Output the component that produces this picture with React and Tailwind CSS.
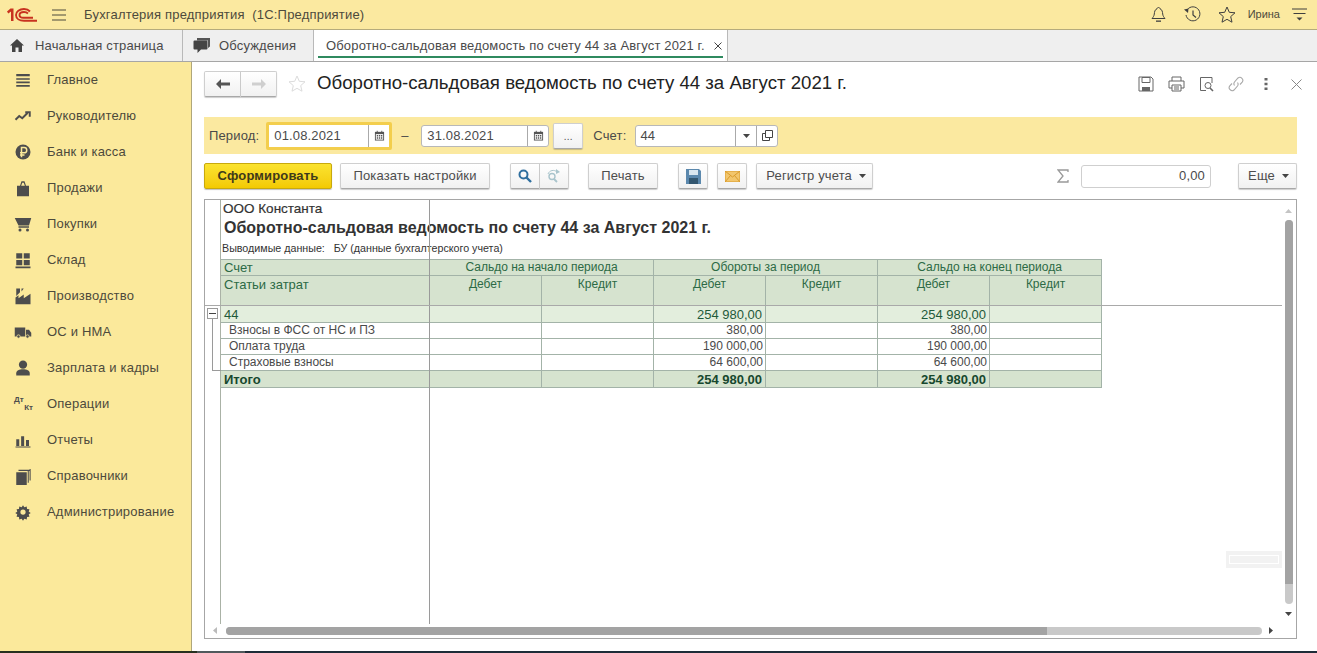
import React from "react";

const I = ({ children, className = "", size = 18, vb = 24 }) => (
  <svg width={size} height={size} viewBox={`0 0 ${vb} ${vb}`} className={`shrink-0 ${className}`}>{children}</svg>
);

const menu = [
  ["Главное", <I><path d="M3 4h18v3H3zM3 9.500h18v2.200H3zM3 14h18v2.200H3zM3 18.500h18V21H3z" fill="#4d4d4d" /></I>],
  ["Руководителю", <I><path d="M2 17l5-5 4 3 7-7M15 7h6v6" fill="none" stroke="#4d4d4d" strokeWidth="2.600" /></I>],
  ["Банк и касса", <I><circle cx="12" cy="12" r="10" fill="#4d4d4d" /><path d="M10 19V6h3.500a3.500 3.500 0 010 7H8M8 16h6" fill="none" stroke="#fbe99b" strokeWidth="2" /></I>],
  ["Продажи", <I><path d="M4 9h4l2-6h4l2 6h4v14H4z" fill="#4d4d4d" /><path d="M9.500 9h5L13 5h-2z" fill="#fbe99b" /></I>],
  ["Покупки", <I><path d="M1 4h22l-3 10H6zM6 15h14v2H6z" fill="#4d4d4d" /><circle cx="8" cy="20" r="2" fill="#4d4d4d" /><circle cx="18" cy="20" r="2" fill="#4d4d4d" /></I>],
  ["Склад", <I><path d="M3 3h8v7H3zM13 3h8v7h-8zM3 12h8v7H3zM13 12h8v7h-8zM2 20.500h20V23H2z" fill="#4d4d4d" /></I>],
  ["Производство", <I><path d="M2 23V14l4-3v4l7-5v5l9-6v14z" fill="#4d4d4d" /><path d="M3 2h5v5l-5 5zM10 2h3l-3 4z" fill="#4d4d4d" /></I>],
  ["ОС и НМА", <I><path d="M1 6h14v12H1zM16 9h4l3 4v5h-7z" fill="#4d4d4d" /><circle cx="6" cy="18" r="2.200" fill="#4d4d4d" stroke="#fbe99b" /><circle cx="18" cy="18" r="2.200" fill="#4d4d4d" stroke="#fbe99b" /></I>],
  ["Зарплата и кадры", <I><circle cx="12" cy="7.500" r="5.500" fill="#4d4d4d" /><path d="M3 22v-3c0-4 4-5.500 9-5.500s9 1.500 9 5.500v3z" fill="#4d4d4d" /></I>],
  ["Операции", <span className="block w-[18px] h-[18px] relative text-[8px] font-bold leading-[8px] text-[#4d4d4d] shrink-0 tracking-normal"><span className="absolute left-0 top-[1px]">Дт</span><span className="absolute right-[-1px] top-[9px]">Кт</span></span>],
  ["Отчеты", <I><path d="M3 11h4v9H3zM9.500 7h4v13h-4zM16 12h4v8h-4zM2 20.500h20V22H2z" fill="#4d4d4d" /></I>],
  ["Справочники", <I><path d="M3 7h14v17H3z" fill="#4d4d4d" /><path d="M19 5v16M21.500 2.500V18M6 4.500h15.500" fill="none" stroke="#4d4d4d" strokeWidth="1.400" /></I>],
  ["Администрирование", <I><path d="M12 2l2 3 3.500-1 .5 3.500 3.500.5-1 3.500 3 2-3 2 1 3.500-3.500.5-.5 3.500-3.500-1-2 3-2-3-3.500 1-.5-3.500-3.500-.5 1-3.500-3-2 3-2-1-3.500 3.500-.5.5-3.500 3.500 1z" fill="#4d4d4d" transform="translate(1.200 1.200) scale(.9)" /><circle cx="12" cy="12" r="3.500" fill="#fbe99b" /></I>],
];

const btn = "flex items-center justify-center h-[26px] rounded-[2px] border border-[#cfcfcf] border-b-[#a8a8a8] bg-gradient-to-b from-white to-[#f1f1f1] shadow-[0_1px_1px_rgba(0,0,0,0.2)] text-[#4d4d4d]";
const cell = "border border-[#a3b3a8] px-[3px] h-[16px] leading-[15px] overflow-hidden whitespace-nowrap";
const hcell = "border border-[#a3b3a8] px-[3px] leading-[17px] overflow-hidden whitespace-nowrap font-normal";

const Cal = () => (
  <I size={11} vb={12}><path d="M1 2h10v9.500H1z" fill="#555" /><path d="M2 4.500h8V10.500H2z" fill="#fff" /><path d="M3 5.500h1.500V7H3zM5.300 5.500h1.500V7H5.300zM7.600 5.500h1.500V7H7.600zM3 8h1.500v1.500H3zM5.300 8h1.500v1.500H5.300zM7.600 8h1.500v1.500H7.600z" fill="#555" /><path d="M3 .8h1v2H3zM8 .8h1v2H8z" fill="#555" /></I>
);

const Caret = ({ c = "#444" }) => <svg width="7" height="4" viewBox="0 0 7 4" className="shrink-0"><path d="M0 0h7L3.500 4z" fill={c} /></svg>;

const rows = [
  { name: "44", cls: "bg-[#e3eedd] text-[#1f5a3a] text-[13px] h-[17px]", v1: "254 980,00", v2: "254 980,00" },
  { name: "Взносы в ФСС от НС и ПЗ", cls: "bg-white text-[#4a4a4a] h-[16px]", v1: "380,00", v2: "380,00", indent: true },
  { name: "Оплата труда", cls: "bg-white text-[#4a4a4a] h-[16px]", v1: "190 000,00", v2: "190 000,00", indent: true },
  { name: "Страховые взносы", cls: "bg-white text-[#4a4a4a] h-[16px]", v1: "64 600,00", v2: "64 600,00", indent: true },
  { name: "Итого", cls: "bg-[#d6e3cf] text-[#17482e] font-bold text-[13px] h-[17px]", v1: "254 980,00", v2: "254 980,00" },
];

export default function App() {
  return (
    <div className="w-[1317px] h-[653px] overflow-hidden flex flex-col bg-white text-[12px] text-[#4a4a4a] font-['Liberation_Sans',Arial,sans-serif]">
      {/* header */}
      <header className="h-[30px] shrink-0 flex items-center bg-[#fbe9a0] border-b border-[#b5ab7c] text-[#4d4a3c]">
        <svg width="30" height="14" viewBox="0 0 30 14" className="ml-[7px] shrink-0">
          <path d="M0 3.500L3.500 .5H6.500V13H4V3.500L1.300 5.500z" fill="#c8321f" />
          <path d="M23 3.500C21.500 1.800 19.500 1 17 1 12.500 1 9 3.500 9 7s3.500 5.800 8 5.800H30M21 5.500C20 4.500 18.800 4 17 4c-2.500 0-4.500 1.200-4.500 3s1.500 2.800 4 2.800H26" fill="none" stroke="#c8321f" strokeWidth="1.900" />
        </svg>
        <svg width="14" height="12" viewBox="0 0 14 12" className="ml-[15px] shrink-0"><path d="M0 1h14M0 6h14M0 11h14" stroke="#4d4a3c" strokeWidth="1" /></svg>
        <span className="ml-[18px] text-[13px] tracking-[0.19px] whitespace-pre">Бухгалтерия предприятия  (1С:Предприятие)</span>
        <div className="ml-auto flex items-center mr-[10px]">
          <svg width="17" height="17" viewBox="0 0 17 17"><path d="M8.500 1.500c-1 0-1.500.7-1.500 1.300C4.800 3.500 4.500 6 4.300 8c-.2 2-1.300 3.300-2.300 4.500h13c-1-1.200-2.100-2.500-2.300-4.500-.2-2-.5-4.500-2.700-5.200 0-.6-.5-1.300-1.500-1.300z" fill="none" stroke="#3f3f3f" /><path d="M6 14.500h5v1.300H6z" fill="#3f3f3f" /></svg>
          <svg width="17" height="17" viewBox="0 0 17 17" className="ml-[17px]"><path d="M2.500 5A7 7 0 1 1 2 9" fill="none" stroke="#3f3f3f" /><path d="M0 3.500L4 7l.5-4.500z" fill="#3f3f3f" /><path d="M9 4.500V9l3 2.500" fill="none" stroke="#3f3f3f" strokeWidth="1.200" /></svg>
          <svg width="18" height="17" viewBox="0 0 18 17" className="ml-[17px]"><path d="M9 1l2.300 5.300 5.700.5-4.300 3.800 1.300 5.600L9 13.300l-5 2.900 1.300-5.600L1 6.800l5.700-.5z" fill="none" stroke="#3f3f3f" /></svg>
          <span className="ml-[12px] text-[11px]">Ирина</span>
          <svg width="15" height="13" viewBox="0 0 15 13" className="ml-[12px]"><path d="M0 1h15M1.500 5.500h12" stroke="#3f3f3f" /><path d="M4.500 9.500h6l-3 3z" fill="#3f3f3f" /></svg>
        </div>
      </header>

      {/* tabs */}
      <nav className="h-[32px] shrink-0 flex bg-[#efefef] border-b border-[#a6a6a6] text-[13px] tracking-[0.155px]">
        <div className="w-[183px] flex items-center border-r border-[#b9b9b9]">
          <svg width="14" height="13" viewBox="0 0 14 13" className="ml-[10px]"><path d="M7 0l7 6.500h-2V13H8.500V8.500h-3V13H2V6.500H0z" fill="#444" /></svg>
          <span className="ml-[11px]">Начальная страница</span>
        </div>
        <div className="w-[131px] flex items-center border-r border-[#b9b9b9]">
          <svg width="17" height="15" viewBox="0 0 17 15" className="ml-[10px]"><path d="M4 0h13v8.500l-2 1.500V2.500H4z" fill="#555" /><path d="M1.500 2.500h12a1 1 0 011 1v7a1 1 0 01-1 1H8L4.500 15v-3.500h-3a1 1 0 01-1-1v-7a1 1 0 011-1z" fill="#444" /></svg>
          <span className="ml-[9px]">Обсуждения</span>
        </div>
        <div className="relative w-[414px] flex items-center bg-white border-r border-[#b9b9b9]">
          <span className="ml-[12px] whitespace-nowrap">Оборотно-сальдовая ведомость по счету 44 за Август 2021 г.</span>
          <svg width="8" height="8" viewBox="0 0 8 8" className="ml-auto mr-[5px]"><path d="M.5.500l7 7M7.500.500l-7 7" stroke="#444" /></svg>
          <span className="absolute left-[4px] right-[4px] bottom-[3px] h-[2px] bg-[#2f8a5f]" />
        </div>
      </nav>

      <div className="flex-1 min-h-0 flex">
        {/* sidebar */}
        <aside className="w-[192px] shrink-0 bg-[#fbe99b] border-r border-[#b0a77a] text-[13px] tracking-[0.2px] text-[#4d4a3c]">
          {menu.map(([t, ic]) => (
            <div key={t} className="h-[36px] flex items-center pl-[14px]">
              {ic}
              <span className="ml-[15px] whitespace-nowrap">{t}</span>
            </div>
          ))}
        </aside>

        {/* main */}
        <main className="flex-1 min-w-0 pl-[12px] pr-[20px] flex flex-col">
          <div className="h-[55px] shrink-0 flex items-start pt-[9px]">
            <div className="flex">
              <div className={`${btn} w-[37px] h-[25px] rounded-r-none`}>
                <svg width="14" height="10" viewBox="0 0 14 10"><path d="M5 0v3.500h9v3H5V10L0 5z" fill="#555" /></svg>
              </div>
              <div className={`${btn} w-[36px] h-[25px] rounded-l-none border-l-0`}>
                <svg width="14" height="10" viewBox="0 0 14 10"><path d="M9 0v3.500H0v3h9V10l5-5z" fill="#cfcfcf" /></svg>
              </div>
            </div>
            <svg width="18" height="18" viewBox="0 0 18 18" className="ml-[11px] mt-[4px] shrink-0"><path d="M9 1l2.300 5.300 5.700.5-4.300 3.800 1.300 5.600L9 13.300l-5 2.900 1.300-5.600L1 6.800l5.700-.5z" fill="none" stroke="#dcdcdc" /></svg>
            <h1 className="ml-[11px] text-[18.650px] leading-[24px] text-[#222] whitespace-nowrap">Оборотно-сальдовая ведомость по счету 44 за Август 2021 г.</h1>
            <div className="ml-auto flex items-center h-[26px] mr-[-5px] text-[#666]">
              <svg width="16" height="16" viewBox="0 0 16 16"><path d="M1 1h12l2 2v12H1z" fill="none" stroke="#666" /><path d="M4 1.500h8v5H4z" fill="none" stroke="#666" /><path d="M4 11h8v4H4z" fill="#666" /></svg>
              <svg width="17" height="16" viewBox="0 0 17 16" className="ml-[14px]"><path d="M4 5V1h9v4M4 12H1V5h15v7h-3" fill="none" stroke="#666" /><path d="M4 9h9v6H4z" fill="none" stroke="#666" /><path d="M6 11h5M6 13h5" stroke="#666" /></svg>
              <svg width="16" height="16" viewBox="0 0 16 16" className="ml-[14px]"><path d="M7 14.500H1.500v-13H13V7" fill="none" stroke="#666" /><circle cx="9" cy="9.500" r="3" fill="none" stroke="#666" /><path d="M11 12l3 3" stroke="#666" strokeWidth="1.600" /></svg>
              <svg width="16" height="16" viewBox="0 0 16 16" className="ml-[13px]"><path d="M6.500 9.500a3 3 0 010-3.500l3.500-4a3 3 0 014.200 4.200L12 8.500M9.500 6.500a3 3 0 010 3.500l-3.500 4a3 3 0 01-4.200-4.200L4 7.500" fill="none" stroke="#a8a8a8" strokeWidth="1.100" /></svg>
              <svg width="4" height="12" viewBox="0 0 4 12" className="ml-[20px]"><path d="M.5 0h3v2.500h-3zM.5 4.700h3v2.500h-3zM.5 9.500h3V12h-3z" fill="#666" /></svg>
              <svg width="11" height="11" viewBox="0 0 11 11" className="ml-[23px]"><path d="M.5.500l10 10M10.500.500l-10 10" stroke="#888" /></svg>
            </div>
          </div>

          {/* period bar */}
          <div className="h-[37px] shrink-0 bg-[#fbe9a0] flex items-center pl-[5px] text-[13px] tracking-[0.15px]">
            <span>Период:</span>
            <div className="ml-[7px] w-[126px] h-[28px] border-[3px] border-[#f3ce4d] bg-white flex items-center pl-[5px] rounded-[2px]">
              <span className="flex-1">01.08.2021</span>
              <span className="w-[21px] h-full border-l border-[#aaa] flex items-center justify-center"><Cal /></span>
            </div>
            <span className="ml-[9px] w-[20px]">–</span>
            <div className="w-[128px] h-[22px] border border-[#b8b8b8] rounded-[3px] bg-white flex items-center pl-[5px]">
              <span className="flex-1">31.08.2021</span>
              <span className="w-[21px] h-full border-l border-[#aaa] flex items-center justify-center"><Cal /></span>
            </div>
            <div className={`${btn} ml-[4px] w-[30px]`}><span className="text-[10px] leading-none mt-[3px]">...</span></div>
            <span className="ml-[10px]">Счет:</span>
            <div className="ml-[9px] w-[143px] h-[22px] border border-[#b8b8b8] rounded-[3px] bg-white flex items-center pl-[4px]">
              <span className="flex-1">44</span>
              <span className="w-[21px] h-full border-l border-[#aaa] flex items-center justify-center"><Caret /></span>
              <span className="w-[21px] h-full border-l border-[#aaa] flex items-center justify-center">
                <svg width="11" height="11" viewBox="0 0 11 11"><path d="M3.500 7.500V.5h7v7zM3.500 3.500h-3v7h7v-3" fill="none" stroke="#444" /></svg>
              </span>
            </div>
          </div>

          {/* buttons */}
          <div className="mt-[9px] h-[26px] shrink-0 flex items-center text-[13px] tracking-[0.15px]">
            <div className="flex items-center justify-center w-[128px] h-[26px] rounded-[2px] border border-[#c8a90e] bg-gradient-to-b from-[#fbe32e] to-[#f3ca00] shadow-[0_1px_1px_rgba(0,0,0,0.25)] font-bold text-[#3f3a1a]">Сформировать</div>
            <div className={`${btn} ml-[8px] w-[150px]`}>Показать настройки</div>
            <div className="ml-[20px] flex">
              <div className={`${btn} w-[30px] rounded-r-none`}>
                <svg width="14" height="14" viewBox="0 0 14 14"><circle cx="5.500" cy="5.500" r="4" fill="none" stroke="#2f6f9f" strokeWidth="2" /><path d="M8.500 8.500L13 13" stroke="#2f6f9f" strokeWidth="2.400" /></svg>
              </div>
              <div className={`${btn} w-[29px] rounded-l-none border-l-0`}>
                <svg width="16" height="14" viewBox="0 0 16 14"><circle cx="6" cy="7.500" r="3" fill="none" stroke="#a9c4cc" strokeWidth="1.400" /><path d="M8 10l3 3" stroke="#a9c4cc" strokeWidth="1.800" /><path d="M2 5a5.500 5.500 0 019-2" fill="none" stroke="#a9c4cc" /><path d="M10 0l4 3-4 2z" fill="#a9c4cc" /></svg>
              </div>
            </div>
            <div className={`${btn} ml-[19px] w-[70px]`}>Печать</div>
            <div className={`${btn} ml-[20px] w-[30px]`}>
              <svg width="15" height="15" viewBox="0 0 15 15"><path d="M0 0h13l2 2v13H0z" fill="#5b88ad" /><path d="M3 1h9v5H3z" fill="#d9e6ef" /><path d="M3 9h9v6H3z" fill="#33566f" /></svg>
            </div>
            <div className={`${btn} ml-[9px] w-[30px]`}>
              <svg width="15" height="11" viewBox="0 0 15 11"><path d="M0 0h15v11H0z" fill="#f2c66d" stroke="#d99a2b" /><path d="M0 0l7.500 6L15 0M0 11l5.500-6.500M15 11L9.500 4.500" fill="none" stroke="#d99a2b" /></svg>
            </div>
            <div className={`${btn} ml-[9px] w-[117px] !justify-end pr-[6px] gap-[7px]`}>Регистр учета <Caret /></div>
            <svg width="12" height="14" viewBox="0 0 12 14" className="ml-auto"><path d="M11 3V1H1l5 6-5 6h10v-2" fill="none" stroke="#999" strokeWidth="1.300" /></svg>
            <div className="ml-[12px] w-[130px] h-[23px] border border-[#cfcfcf] rounded-[3px] bg-white flex items-center justify-end pr-[5px]">0,00</div>
            <div className={`${btn} ml-[27px] w-[59px] !justify-end pr-[7px] gap-[7px]`}>Еще <Caret /></div>
          </div>

          {/* spreadsheet */}
          <section className="relative mt-[10px] w-[1093px] h-[440px] shrink-0 border border-[#a6a6a6] pl-[15px] overflow-hidden">
            <div className="pl-[3px] pt-[2px] text-[13.500px] text-[#333] leading-[14px] [-webkit-text-stroke:0.2px_#333]">ООО Константа</div>
            <div className="pl-[4px] pt-[2px] h-[22px] text-[16px] leading-[20px] font-bold text-[#333]">Оборотно-сальдовая ведомость по счету 44 за Август 2021 г.</div>
            <div className="pl-[2px] text-[10.700px] leading-[14px] h-[21px] pt-[3px] text-[#333] whitespace-pre">Выводимые данные:   БУ (данные бухгалтерского учета)</div>

            <table className="border-collapse table-fixed w-[881px] text-[12px]">
              <colgroup>
                <col className="w-[209px]" /><col className="w-[112px]" /><col className="w-[112px]" /><col className="w-[112px]" /><col className="w-[112px]" /><col className="w-[112px]" /><col className="w-[112px]" />
              </colgroup>
              <thead className="bg-[#d6e3cf] text-[#2c6a45]">
                <tr className="h-[16px]">
                  <th className={`${cell} font-normal text-left text-[13px]`}>Счет</th>
                  <th colSpan="2" className={`${cell} font-normal`}>Сальдо на начало периода</th>
                  <th colSpan="2" className={`${cell} font-normal`}>Обороты за период</th>
                  <th colSpan="2" className={`${cell} font-normal`}>Сальдо на конец периода</th>
                </tr>
                <tr className="h-[30px]">
                  <th className={`${hcell} text-left align-top text-[13px]`}>Статьи затрат</th>
                  {["Дебет", "Кредит", "Дебет", "Кредит", "Дебет", "Кредит"].map((t, i) => (
                    <th key={i} className={`${hcell} align-top`}>{t}</th>
                  ))}
                </tr>
              </thead>
              <tbody>
                {rows.map((r) => (
                  <tr key={r.name} className={r.cls}>
                    <td className={`${cell} ${r.indent ? "pl-[8px]" : ""}`}>{r.name}</td>
                    <td className={cell} /><td className={cell} />
                    <td className={`${cell} text-right ${r.indent ? "pr-[2px]" : ""}`}>{r.v1}</td><td className={cell} />
                    <td className={`${cell} text-right ${r.indent ? "pr-[2px]" : ""}`}>{r.v2}</td><td className={cell} />
                  </tr>
                ))}
              </tbody>
            </table>

            {/* fixed-area lines */}
            <span className="absolute left-[15px] top-0 h-[424px] w-px bg-[#aab2a6]" />
            <span className="absolute left-[224px] top-0 h-[424px] w-px bg-[#9a9a9a]" />
            <span className="absolute left-0 top-[105px] w-[1077px] h-px bg-[#a9a9a9]" />

            {/* outline tree */}
            <span className="absolute left-[2px] top-[108px] w-[11px] h-[11px] border border-[#9a9a9a] flex items-center justify-center">
              <span className="w-[7px] h-px bg-[#444]" />
            </span>
            <span className="absolute left-[7px] top-[119px] w-[9px] h-[52px] border-l border-b border-[#9a9a9a]" />

            {/* scrollbars */}
            <span className="absolute right-[4px] top-[9px]"><svg width="7" height="4" viewBox="0 0 7 4" className="block"><path d="M0 4h7L3.500 0z" fill="#c4c4c4" /></svg></span>
            <span className="absolute right-[3px] top-[20px] w-[8px] h-[384px] rounded-full bg-[#c9c9c9]">
              <span className="block w-full h-[364px] rounded-t-full bg-[#a3a3a3]" />
            </span>
            <span className="absolute right-[4px] top-[412px]"><Caret /></span>
            <span className="absolute left-[8px] top-[427px]"><svg width="4" height="7" viewBox="0 0 4 7" className="block"><path d="M4 0v7L0 3.500z" fill="#bbb" /></svg></span>
            <span className="absolute left-[21px] top-[427px] w-[1036px] h-[8px] rounded-full bg-[#c9c9c9]">
              <span className="block h-full w-[821px] rounded-l-full bg-[#a3a3a3]" />
            </span>
            <span className="absolute left-[1064px] top-[427px]"><svg width="4" height="7" viewBox="0 0 4 7" className="block"><path d="M0 0v7l4-3.500z" fill="#444" /></svg></span>

            {/* ghost thumbnail */}
            <span className="absolute left-[1021px] top-[351px] w-[56px] h-[17px] bg-[#f2f2f2] flex items-center">
              <span className="ml-[3px] w-[50px] h-[9px] border border-white" />
            </span>
          </section>
        </main>
      </div>
      <div className="h-[2px] shrink-0 flex">
        <span className="w-[197px] bg-[#27301f]" />
        <span className="w-[48px] bg-[#50595c]" />
        <span className="flex-1 bg-[#1d2c38]" />
      </div>
    </div>
  );
}
